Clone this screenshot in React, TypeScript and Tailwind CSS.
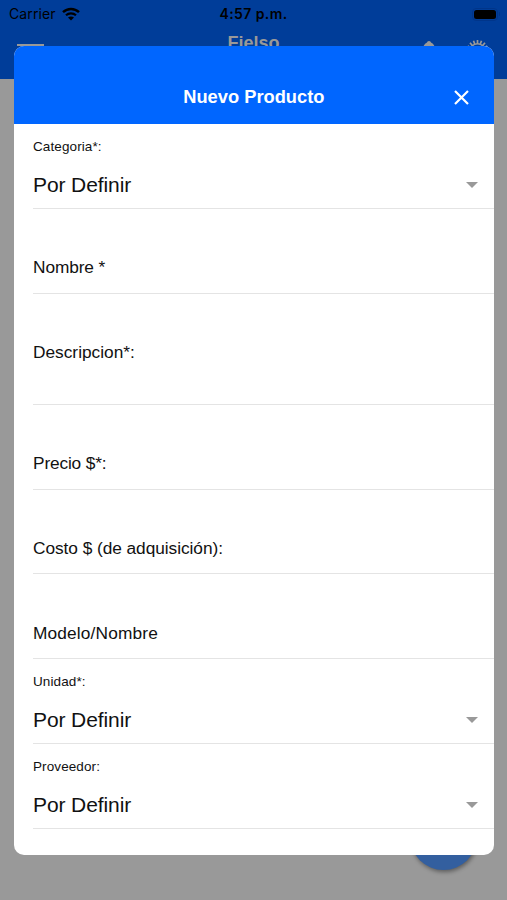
import React from "react";

type Field = {
  label: string;
  kind: "select" | "input" | "textarea";
  value?: string;
  labelClass?: string;
};

const fields: Field[] = [
  { label: "Categoria*:", kind: "select", value: "Por Definir" },
  { label: "Nombre *", kind: "input", labelClass: "tracking-[-0.1px]" },
  { label: "Descripcion*:", kind: "textarea" },
  { label: "Precio $*:", kind: "input", labelClass: "tracking-[-0.15px]" },
  { label: "Costo $ (de adquisición):", kind: "input", labelClass: "tracking-[-0.05px]" },
  { label: "Modelo/Nombre", kind: "input", labelClass: "tracking-[0.15px]" },
  { label: "Unidad*:", kind: "select", value: "Por Definir" },
  { label: "Proveedor:", kind: "select", value: "Por Definir" },
];

const StatusBar = () => (
  <div className="grid h-[28px] grid-cols-3 items-center pr-[7px] pl-[9px] font-[Inter,'Liberation_Sans',sans-serif] text-[14px] leading-[16px] text-black">
    <div className="flex items-center">
      <span className="w-[53px] tracking-[0.1px]">Carrier</span>
      <svg width="18" height="14" viewBox="0 0 18 14" fill="none">
        <path d="M1 5.2C5.5.9 12.5.9 17 5.2" stroke="currentColor" strokeWidth="2.4" />
        <path d="M4 8.3C6.8 5.6 11.2 5.6 14 8.3" stroke="currentColor" strokeWidth="2.2" />
        <path d="M6 10.6c1.7-1.6 4.3-1.6 6 0L9 13.6z" fill="currentColor" />
      </svg>
    </div>
    <span className="-ml-[2px] text-center text-[14px] font-semibold tracking-[0.4px] whitespace-nowrap">
      4:57 p.m.
    </span>
    <div className="flex items-center justify-end gap-[1px]">
      <div className="rounded-[4px] border border-[#00358a] p-[1px]">
        <div className="h-[9px] w-[22px] rounded-[2.5px] bg-black" />
      </div>
      <div className="h-[4px] w-[1px] rounded-r bg-[#00358a]" />
    </div>
  </div>
);

const AppHeader = () => (
  <header className="h-[79px] bg-[#003d99]">
    <StatusBar />
    <div className="grid grid-cols-3 items-start pr-[18px] pl-[17px] text-[#999999]">
      <div className="flex w-[27px] flex-col gap-[7px] pt-[16px]">
        <div className="h-[2px] bg-current" />
        <div className="h-[2px] bg-current" />
        <div className="h-[2px] bg-current" />
      </div>
      <span className="pt-[5px] pl-[1px] text-center text-[18px] leading-[20px] font-bold">
        Fielso
      </span>
      <div className="flex justify-end gap-[28px] pt-[12px]">
        <svg width="22" height="24" viewBox="0 0 22 24" fill="currentColor">
          <path d="M12 1c1.200 0 1.800.8 2 1.600C17 4 18 6.500 18 10v5l3 4H3l3-4v-5c0-3.500 1-6 4-7.400.2-.8.8-1.600 2-1.600z" />
        </svg>
        <svg width="22" height="22" viewBox="0 0 22 22" fill="none" stroke="currentColor">
          <path
            d="M10.5 0v4M14.500.7l-1.300 3.600M18 2.800l-2.500 3M20.300 6l-3.500 2M6.500.7l1.300 3.600M3 2.800l2.500 3M.7 6l3.500 2"
            strokeWidth="1.700"
          />
          <circle cx="10.500" cy="11.500" r="7.800" strokeWidth="1.600" />
        </svg>
      </div>
    </div>
  </header>
);

const FieldRow = ({ label, kind, value, labelClass = "" }: Field) => {
  if (kind === "select") {
    return (
      <div className="flex h-[84.8px] shrink-0 flex-col border-b border-[#e4e4e4] pt-[14px]">
        <span className="text-[13.5px] leading-[18px] tracking-[0.1px]">{label}</span>
        <div className="mt-[15.5px] flex items-center justify-between pr-[16px]">
          <span className="text-[21px] leading-[26px] tracking-[-0.1px]">{value}</span>
          <svg width="12" height="6" viewBox="0 0 12 6" className="text-[#999999]">
            <path d="M0 0h12L6 6z" fill="currentColor" />
          </svg>
        </div>
      </div>
    );
  }

  return (
    <div
      className={`shrink-0 border-b border-[#e4e4e4] pt-[47.5px] text-[17.3px] leading-[22px] ${
        kind === "textarea" ? "h-[111.3px]" : "h-[84.8px]"
      }`}
    >
      <span className={labelClass}>{label}</span>
    </div>
  );
};

const ProductModal = () => (
  <section className="absolute top-[45.5px] left-[13.5px] flex h-[809.5px] w-[480.7px] flex-col overflow-hidden rounded-[10px] bg-white">
    <div className="grid h-[78.5px] shrink-0 grid-cols-[1fr_auto_1fr] items-center bg-[#0066ff] pt-[25px] pr-[25px] text-white">
      <h1 className="col-start-2 pl-[25px] text-[18.3px] leading-[22px] font-bold">
        Nuevo Producto
      </h1>
      <button type="button" aria-label="Cerrar" className="justify-self-end">
        <svg width="15" height="15" viewBox="0 0 15 15" stroke="currentColor" strokeWidth="2.2">
          <path d="M1 1l13 13M14 1L1 14" />
        </svg>
      </button>
    </div>
    <form className="flex flex-col pl-[19.5px] text-[#111111]">
      {fields.map((field) => (
        <FieldRow key={field.label} {...field} />
      ))}
    </form>
  </section>
);

const App = () => {
  return (
    <main className="relative h-[900px] w-[507px] overflow-hidden bg-[#999999] font-['Liberation_Sans',Arial,sans-serif]">
      <AppHeader />
      {/* floating action button, mostly hidden by the modal */}
      <div className="absolute top-[803px] left-[410px] h-[67px] w-[67px] rounded-full bg-[#335f9f] shadow-[1px_2px_4px_rgba(0,0,0,0.4)]" />
      <ProductModal />
    </main>
  );
};

export default App;
